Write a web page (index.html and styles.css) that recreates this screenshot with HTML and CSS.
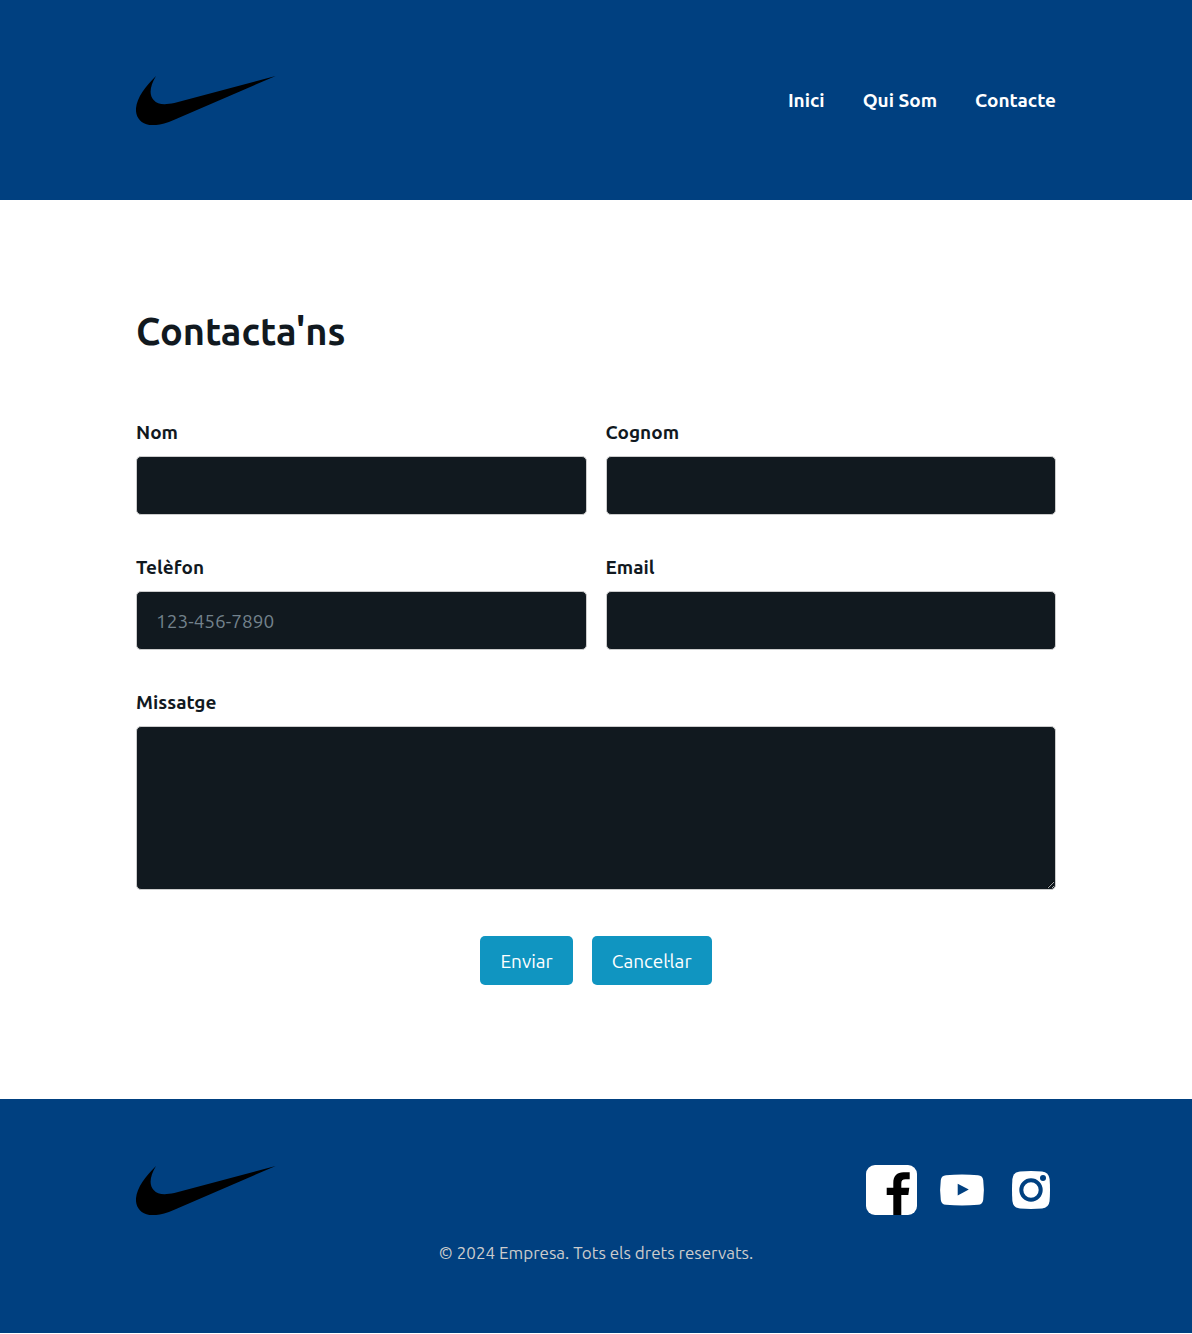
FILE: index.html
```html
<!DOCTYPE html>
<html lang="ca">
<head>
  <meta charset="utf-8">
  <meta name="viewport" content="width=device-width, initial-scale=1">
  <title>Contacta'ns</title>
  <link rel="stylesheet" href="styles.css">
</head>
<body>
  <header class="site-header">
    <div class="container bar">
      <a class="logo" href="#" aria-label="Nike">
        <svg viewBox="30 27 420 150" aria-hidden="true"><path d="M90 30C72 60 68 86 83 102C95 116 115 117 145 111L449 30L145 161C110 176 88 179 70 177C43 173 28 152 30 127C33 94 58 62 90 30Z"/></svg>
      </a>
      <nav class="menu">
        <a href="#">Inici</a>
        <a href="#">Qui Som</a>
        <a href="#">Contacte</a>
      </nav>
    </div>
  </header>

  <main class="container content">
    <h1>Contacta'ns</h1>
    <form class="contact-form">
      <div class="field">
        <label for="nom">Nom</label>
        <input id="nom" type="text">
      </div>
      <div class="field">
        <label for="cognom">Cognom</label>
        <input id="cognom" type="text">
      </div>
      <div class="field">
        <label for="telefon">Telèfon</label>
        <input id="telefon" type="tel" placeholder="123-456-7890">
      </div>
      <div class="field">
        <label for="email">Email</label>
        <input id="email" type="email">
      </div>
      <div class="field wide">
        <label for="missatge">Missatge</label>
        <textarea id="missatge"></textarea>
      </div>
      <div class="actions wide">
        <button type="submit">Enviar</button>
        <button type="reset">Cancel·lar</button>
      </div>
    </form>
  </main>

  <footer class="site-footer">
    <div class="container bar">
      <a class="logo" href="#" aria-label="Nike">
        <svg viewBox="30 27 420 150" aria-hidden="true"><path d="M90 30C72 60 68 86 83 102C95 116 115 117 145 111L449 30L145 161C110 176 88 179 70 177C43 173 28 152 30 127C33 94 58 62 90 30Z"/></svg>
      </a>
      <div class="social">
        <a href="#" aria-label="Facebook">
          <svg viewBox="0 0 50 50" aria-hidden="true">
            <rect width="51" height="50" rx="9" fill="#fff"/>
            <path d="M27.3 50V30H20.7V22.7H27.3V18C27.3 11 31 7.3 37.5 7.3H43.7V14.3H39.5C36.5 14.3 35.3 15.6 35.3 18.5V22.7H43.3L42.3 30H35.3V50Z"/>
          </svg>
        </a>
        <a href="#" aria-label="YouTube">
          <svg viewBox="0 0 50 50" aria-hidden="true">
            <path fill="#fff" fill-rule="evenodd" d="M10 10.2Q26 9 42 10.2Q46.500 10.500 47.200 15Q48.600 25 47.200 35Q46.500 39.500 42 39.800Q26 41 10 39.800Q5.500 39.500 4.800 35Q3.400 25 4.800 15Q5.500 10.500 10 10.2ZM21.700 18.700V30.600L32.800 24.600Z"/>
          </svg>
        </a>
        <a href="#" aria-label="Instagram">
          <svg viewBox="0 0 50 50" aria-hidden="true">
            <path fill="#fff" d="M14 6.400Q25 5.600 36 6.400Q42.800 7.200 43.600 14Q44.400 25 43.600 36Q42.800 42.800 36 43.600Q25 44.400 14 43.600Q7.200 42.800 6.400 36Q5.600 25 6.400 14Q7.200 7.200 14 6.400Z"/>
            <circle cx="25" cy="25" r="9.700" fill="none" stroke="#004080" stroke-width="4"/>
            <circle cx="37" cy="13" r="3" fill="#004080"/>
          </svg>
        </a>
      </div>
    </div>
    <p class="copyright">© 2024 Empresa. Tots els drets reservats.</p>
  </footer>
</body>
</html>
```

FILE: styles.css
```css
* {
  box-sizing: border-box;
}

body {
  margin: 0;
  background: #fff;
  color: #11191f;
  font-family: Ubuntu, "Noto Sans", sans-serif;
  font-size: 19px;
  line-height: 28px;
}

a {
  color: inherit;
  text-decoration: none;
}

svg {
  display: block;
}

.container {
  width: 100%;
  max-width: 920px;
  margin: 0 auto;
}

.bar {
  display: flex;
  align-items: center;
  justify-content: space-between;
}

.logo svg {
  width: 140px;
  height: 50px;
}

.site-header {
  padding: 75px 20px;
  background: #004080;
  color: #fff;
}

.menu {
  display: flex;
  gap: 38px;
  font-weight: 600;
}

.content {
  padding: 107px 0 114px;
}

h1 {
  margin: 0 0 63px;
  font-size: 38px;
  font-weight: 600;
  line-height: 48px;
}

.contact-form {
  display: grid;
  grid-template-columns: 1fr 1fr;
  gap: 38px 19px;
}

.field {
  display: flex;
  flex-direction: column;
  gap: 10px;
}

.wide {
  grid-column: 1 / -1;
}

label {
  font-weight: 600;
}

input,
textarea {
  width: 100%;
  padding: 14px 19px;
  border: 1px solid #ccc;
  border-radius: 5px;
  background: #11191f;
  color: #fff;
  font: inherit;
}

input {
  height: 59px;
}

textarea {
  display: block;
  height: 164px;
}

::placeholder {
  color: #73828c;
  opacity: 1;
}

.actions {
  display: flex;
  justify-content: center;
  gap: 19px;
  padding-top: 8px;
}

button {
  height: 49px;
  padding: 0 20px;
  border: 0;
  border-radius: 5px;
  background: #1095c1;
  color: #fff;
  font: inherit;
}

.site-footer {
  padding: 66px 20px;
  background: #004080;
}

.social {
  display: flex;
  gap: 20px;
}

.social svg {
  width: 50px;
  height: 50px;
  overflow: visible;
}

.copyright {
  margin: 24px 0 0;
  color: #ccc;
  font-size: 17px;
  text-align: center;
}
```
